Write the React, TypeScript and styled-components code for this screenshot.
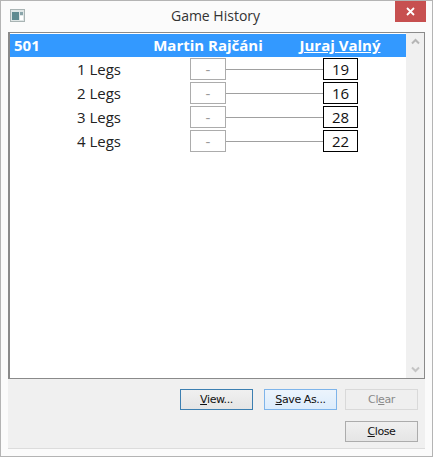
import styled, { createGlobalStyle } from 'styled-components';

const GlobalStyle = createGlobalStyle`
  html, body {
    margin: 0;
    padding: 0;
    background: #fff;
  }
  body {
    font-family: "Open Sans", "Noto Sans", sans-serif;
  }
`;

const Window = styled.div`
  box-sizing: border-box;
  width: 433px;
  height: 457px;
  border: 1px solid #b4b4b4;
  background: #fbfbfb;
  display: flex;
  flex-direction: column;
`;

const TitleBar = styled.div`
  height: 31px;
  flex-shrink: 0;
  display: grid;
  grid-template-columns: 1fr auto 1fr;
  align-items: start;
  padding: 0 6px 0 9px;
`;

const AppIcon = styled.svg`
  display: block;
  margin-top: 8px;
`;

const Title = styled.div`
  font-size: 14px;
  line-height: 18px;
  margin: 6px 5px 0 0;
  color: #333;
`;

const CloseButton = styled.div`
  justify-self: end;
  width: 31px;
  height: 21px;
  background: #c75050;
  display: flex;
  align-items: center;
  justify-content: center;
`;

const Client = styled.div`
  flex: 1;
  margin: 0 7px 7px;
  display: flex;
  flex-direction: column;
  background: #f0f0f0;
  border-bottom: 1px solid #dcdcdc;
`;

const ListPanel = styled.div`
  box-sizing: border-box;
  height: 347px;
  flex-shrink: 0;
  border: 1px solid #8a8a8a;
  border-left-width: 2px;
  background: #fff;
  display: flex;
`;

const ListContent = styled.div`
  width: 396px;
  padding-top: 1px;
`;

const Header = styled.div`
  height: 23px;
  background: #3399ff;
  color: #fff;
  font-size: 15px;
  font-weight: 700;
  line-height: 23px;
  display: grid;
  grid-template-columns: 120px 156px 108px;
  margin-bottom: 1px;
`;

const GameType = styled.div`
  padding-left: 4px;
`;

const PlayerName = styled.div<{ $active?: boolean }>`
  text-align: center;
  white-space: nowrap;
  text-decoration: ${(p) => (p.$active ? 'underline' : 'none')};
`;

const LegRow = styled.div`
  height: 24px;
  display: grid;
  grid-template-columns: 180px 36px 97px 35px;
  align-items: start;
`;

const LegLabel = styled.div`
  font-size: 15px;
  line-height: 22px;
  padding-right: 2px;
  text-align: center;
  color: #222;
`;

const ScoreBox = styled.div<{ $winner?: boolean }>`
  box-sizing: border-box;
  height: 22px;
  border: 1px solid ${(p) => (p.$winner ? '#000' : '#acacac')};
  color: ${(p) => (p.$winner ? '#111' : '#9a9a9a')};
  font-size: 15px;
  line-height: 20px;
  text-align: center;
`;

const Connector = styled.div`
  height: 1px;
  margin-top: 11px;
  background: #a0a0a0;
`;

const ScrollBar = styled.div`
  flex: 1;
  background: #f0f0f0;
  display: flex;
  flex-direction: column;
  justify-content: space-between;
  align-items: center;
  padding: 5px 0;
`;

const Footer = styled.div`
  flex: 1;
  box-sizing: border-box;
  padding: 10px 7px 0 0;
  display: flex;
  flex-direction: column;
  align-items: flex-end;
  gap: 11px;
`;

const ButtonRow = styled.div`
  display: flex;
  gap: 8px;
`;

const Button = styled.div<{ $variant?: 'default' | 'hover' | 'disabled' }>`
  box-sizing: border-box;
  width: 73px;
  height: 21px;
  font-size: 11px;
  line-height: 19px;
  text-align: center;
  font-family: "DejaVu Sans", sans-serif;
  letter-spacing: -0.4px;
  color: ${(p) => (p.$variant === 'disabled' ? '#8a8a8a' : '#111')};
  border: 1px solid
    ${(p) =>
      p.$variant === 'default'
        ? '#3c7fb1'
        : p.$variant === 'hover'
        ? '#7eb4ea'
        : p.$variant === 'disabled'
        ? '#d9d9d9'
        : '#acacac'};
  background: ${(p) =>
    p.$variant === 'hover'
      ? 'linear-gradient(#ecf4fc, #dcecfc)'
      : p.$variant === 'disabled'
      ? '#efefef'
      : 'linear-gradient(#f0f0f0, #e5e5e5)'};
`;

const SaveSpacer = styled(Button)`
  margin-left: 3px;
`;

const Key = styled.span`
  text-decoration: underline;
`;

const legs = [
  { name: '1 Legs', home: '-', away: '19' },
  { name: '2 Legs', home: '-', away: '16' },
  { name: '3 Legs', home: '-', away: '28' },
  { name: '4 Legs', home: '-', away: '22' },
];

export default function App() {
  return (
    <>
      <GlobalStyle />
      <Window>
        <TitleBar>
          <AppIcon width="15" height="13" viewBox="0 0 15 13">
            <rect x="0.5" y="0.5" width="14" height="12" fill="#dfe6e6" stroke="#a9b4b4" />
            <rect x="2" y="3" width="7" height="8" fill="#5f8a90" />
            <rect x="10" y="3" width="3" height="3" fill="#8aa5aa" />
            <rect x="10" y="7" width="3" height="4" fill="#fff" />
          </AppIcon>
          <Title>Game History</Title>
          <CloseButton>
            <svg width="9" height="9" viewBox="0 0 9 9">
              <path d="M1 1l7 7M8 1l-7 7" stroke="#fff" strokeWidth="1.8" />
            </svg>
          </CloseButton>
        </TitleBar>
        <Client>
          <ListPanel>
            <ListContent>
              <Header>
                <GameType>501</GameType>
                <PlayerName>Martin Rajčáni</PlayerName>
                <PlayerName $active>Juraj Valný</PlayerName>
              </Header>
              {legs.map((leg) => (
                <LegRow key={leg.name}>
                  <LegLabel>{leg.name}</LegLabel>
                  <ScoreBox>{leg.home}</ScoreBox>
                  <Connector />
                  <ScoreBox $winner>{leg.away}</ScoreBox>
                </LegRow>
              ))}
            </ListContent>
            <ScrollBar>
              <svg width="9" height="7" viewBox="0 0 9 7">
                <path d="M1 5.5l3.5-3.5 3.5 3.5" fill="none" stroke="#b5b5b5" strokeWidth="2" />
              </svg>
              <svg width="9" height="7" viewBox="0 0 9 7">
                <path d="M1 1.5l3.5 3.5 3.5-3.5" fill="none" stroke="#c4c4c4" strokeWidth="2" />
              </svg>
            </ScrollBar>
          </ListPanel>
          <Footer>
            <ButtonRow>
              <Button $variant="default"><Key>V</Key>iew...</Button>
              <SaveSpacer $variant="hover"><Key>S</Key>ave As...</SaveSpacer>
              <Button $variant="disabled">Cl<Key>e</Key>ar</Button>
            </ButtonRow>
            <Button><Key>C</Key>lose</Button>
          </Footer>
        </Client>
      </Window>
    </>
  );
}
